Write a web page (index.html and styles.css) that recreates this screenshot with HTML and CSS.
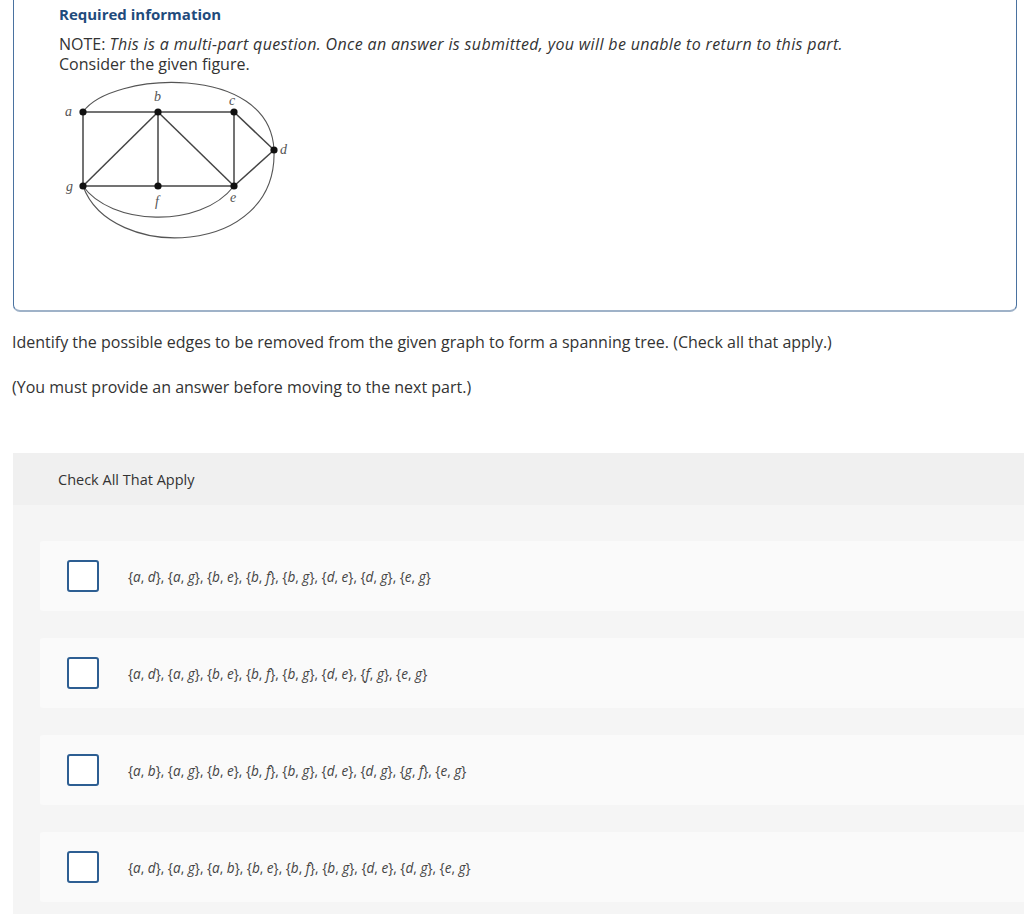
FILE: index.html
```html
<!DOCTYPE html>
<html lang="en">
<head>
<meta charset="utf-8">
<title>Required information</title>
<link rel="stylesheet" href="styles.css">
</head>
<body>
<section class="info-box">
  <h2 class="info-title">Required information</h2>
  <p class="note">NOTE: <em>This is a multi-part question. Once an answer is submitted, you will be unable to return to this part.</em><br>Consider the given figure.</p>
  <svg class="figure" width="240" height="170" viewBox="59 76 240 170" xmlns="http://www.w3.org/2000/svg">
    <g fill="none" stroke="#555" stroke-width="1.1">
      <path d="M83 112 C110 72 270 62 274 150"/>
      <path d="M274 150 C278 258 110 262 83 186"/>
      <path d="M83 186 C110 225 200 230 234 186"/>
    </g>
    <g stroke="#444" stroke-width="1.5">
      <line x1="83" y1="112" x2="234" y2="112"/>
      <line x1="83" y1="112" x2="83" y2="186"/>
      <line x1="83" y1="186" x2="234" y2="186"/>
      <line x1="83" y1="186" x2="158" y2="112"/>
      <line x1="158" y1="112" x2="158" y2="186"/>
      <line x1="158" y1="112" x2="234" y2="186"/>
      <line x1="234" y1="112" x2="234" y2="186"/>
      <line x1="234" y1="112" x2="274" y2="150"/>
      <line x1="274" y1="150" x2="234" y2="186"/>
    </g>
    <g fill="#111">
      <circle cx="83" cy="112" r="3.6"/>
      <circle cx="158" cy="112" r="3.6"/>
      <circle cx="234" cy="112" r="3.6"/>
      <circle cx="274" cy="150" r="3.6"/>
      <circle cx="83" cy="186" r="3.6"/>
      <circle cx="158" cy="186" r="3.6"/>
      <circle cx="234" cy="186" r="3.6"/>
    </g>
    <g fill="#555" font-family="'Liberation Serif', serif" font-style="italic" font-size="14">
      <text x="65" y="116">a</text>
      <text x="154" y="101">b</text>
      <text x="229" y="105">c</text>
      <text x="280" y="154">d</text>
      <text x="66" y="191">g</text>
      <text x="155" y="206">f</text>
      <text x="230" y="202">e</text>
    </g>
  </svg>
</section>

<p class="prompt">Identify the possible edges to be removed from the given graph to form a spanning tree. (Check all that apply.)</p>
<p class="prompt second">(You must provide an answer before moving to the next part.)</p>

<section class="choices">
  <div class="choices-head">Check All That Apply</div>
  <div class="choices-body">
    <label class="choice">
      <span class="box"></span>
      <span class="choice-text">{<i>a</i>, <i>d</i>}, {<i>a</i>, <i>g</i>}, {<i>b</i>, <i>e</i>}, {<i>b</i>, <i>f</i>}, {<i>b</i>, <i>g</i>}, {<i>d</i>, <i>e</i>}, {<i>d</i>, <i>g</i>}, {<i>e</i>, <i>g</i>}</span>
    </label>
    <label class="choice">
      <span class="box"></span>
      <span class="choice-text">{<i>a</i>, <i>d</i>}, {<i>a</i>, <i>g</i>}, {<i>b</i>, <i>e</i>}, {<i>b</i>, <i>f</i>}, {<i>b</i>, <i>g</i>}, {<i>d</i>, <i>e</i>}, {<i>f</i>, <i>g</i>}, {<i>e</i>, <i>g</i>}</span>
    </label>
    <label class="choice">
      <span class="box"></span>
      <span class="choice-text">{<i>a</i>, <i>b</i>}, {<i>a</i>, <i>g</i>}, {<i>b</i>, <i>e</i>}, {<i>b</i>, <i>f</i>}, {<i>b</i>, <i>g</i>}, {<i>d</i>, <i>e</i>}, {<i>d</i>, <i>g</i>}, {<i>g</i>, <i>f</i>}, {<i>e</i>, <i>g</i>}</span>
    </label>
    <label class="choice">
      <span class="box"></span>
      <span class="choice-text">{<i>a</i>, <i>d</i>}, {<i>a</i>, <i>g</i>}, {<i>a</i>, <i>b</i>}, {<i>b</i>, <i>e</i>}, {<i>b</i>, <i>f</i>}, {<i>b</i>, <i>g</i>}, {<i>d</i>, <i>e</i>}, {<i>d</i>, <i>g</i>}, {<i>e</i>, <i>g</i>}</span>
    </label>
  </div>
</section>
</body>
</html>
```

FILE: styles.css
```css
html, body {
  margin: 0;
  padding: 0;
  background: #ffffff;
}

body {
  font-family: "Open Sans", Lato, "Liberation Sans", sans-serif;
  color: #333333;
  overflow: hidden;
}

.info-box {
  margin: 0 7px 0 13px;
  padding: 4px 45px 64px 45px;
  border-left: 1px solid #4a72a0;
  border-right: 1px solid #4a72a0;
  border-bottom: 2px solid #9fb2c8;
  border-radius: 0 0 7px 7px;
}

.info-title {
  margin: 0;
  font-size: 15px;
  line-height: 20px;
  font-weight: 700;
  color: #1f4b7c;
}

.note {
  margin: 10px 0 0 0;
  font-size: 16px;
  line-height: 20px;
  color: #333333;
}

.note em {
  letter-spacing: 0.35px;
}

.figure {
  display: block;
  margin-top: 2px;
}

.prompt {
  margin: 20px 0 0 12px;
  font-size: 16px;
  line-height: 20px;
  color: #333333;
}

.prompt.second {
  margin-top: 25px;
}

.choices {
  margin: 56px 0 0 13px;
  background: #f5f5f5;
}

.choices-head {
  height: 52px;
  display: flex;
  align-items: center;
  padding-left: 45px;
  background: #f0f0f0;
  font-size: 14.5px;
  color: #333333;
}

.choices-body {
  display: flex;
  flex-direction: column;
  gap: 27px;
  padding: 36px 0 12px 27px;
}

.choice {
  height: 70px;
  display: flex;
  align-items: center;
  background: #fafafa;
  border-radius: 3px 0 0 3px;
  padding-left: 27px;
}

.box {
  width: 28px;
  height: 28px;
  border: 2px solid #2d5e92;
  border-radius: 3px;
  background: #ffffff;
  flex: none;
}

.choice-text {
  margin-left: 29px;
  font-size: 13.6px;
  color: #444444;
}

.choice-text i {
  font-style: italic;
}
```
